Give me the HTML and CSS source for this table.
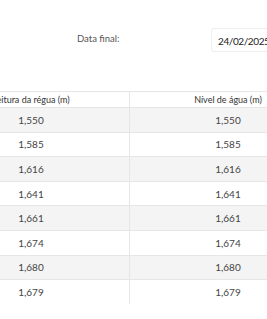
FILE: index.html
```html
<!DOCTYPE html>
<html lang="pt">
<head>
<meta charset="utf-8">
<link rel="stylesheet" href="styles.css">
</head>
<body>
<div class="page">
  <div class="filter">
    <label class="filter-label" for="dt">Data final:</label>
    <div class="date-input" id="dt">24/02/2025</div>
  </div>
  <table class="data-table">
    <thead>
      <tr><th>Leitura da régua (m)</th><th>Nível de água (m)</th></tr>
    </thead>
    <tbody>
      <tr><td>1,550</td><td>1,550</td></tr>
      <tr><td>1,585</td><td>1,585</td></tr>
      <tr><td>1,616</td><td>1,616</td></tr>
      <tr><td>1,641</td><td>1,641</td></tr>
      <tr><td>1,661</td><td>1,661</td></tr>
      <tr><td>1,674</td><td>1,674</td></tr>
      <tr><td>1,680</td><td>1,680</td></tr>
      <tr><td>1,679</td><td>1,679</td></tr>
    </tbody>
  </table>
</div>
</body>
</html>
```

FILE: styles.css
```css
html, body {
  margin: 0;
  padding: 0;
  background: #fff;
  overflow: hidden;
}
body {
  font-family: Lato, "Open Sans", sans-serif;
  color: #444;
}
.page {
  width: 267px;
  height: 319px;
  overflow: hidden;
}
.filter {
  display: flex;
  align-items: flex-start;
  padding-top: 28px;
  height: 64px;
  box-sizing: border-box;
}
.filter-label {
  flex: none;
  margin-left: 77px;
  margin-top: 5px;
  font-size: 9.5px;
  color: #555;
  width: 134px;
}
.date-input {
  flex: none;
  height: 24px;
  line-height: 24px;
  padding-left: 6px;
  width: 80px;
  font-size: 10px;
  letter-spacing: -0.4px;
  color: #222;
  border: 1px solid #efefef;
  border-right: none;
  border-radius: 3px 0 0 3px;
  box-sizing: border-box;
  white-space: nowrap;
}
.data-table {
  margin-top: 27px;
  margin-left: -67px;
  border-collapse: collapse;
  table-layout: fixed;
  width: 392px;
}
.data-table th,
.data-table td {
  width: 196px;
  text-align: center;
  border-top: 1px solid #e6e6e6;
  border-right: 1px solid #e6e6e6;
  padding: 0;
}
.data-table th {
  height: 15px;
  font-size: 9px;
  font-weight: 400;
  color: #333;
}
.data-table td {
  height: 23.6px;
  font-size: 10px;
  color: #444;
}
.data-table tbody tr:nth-child(odd) td {
  background: #f4f4f4;
}
```
